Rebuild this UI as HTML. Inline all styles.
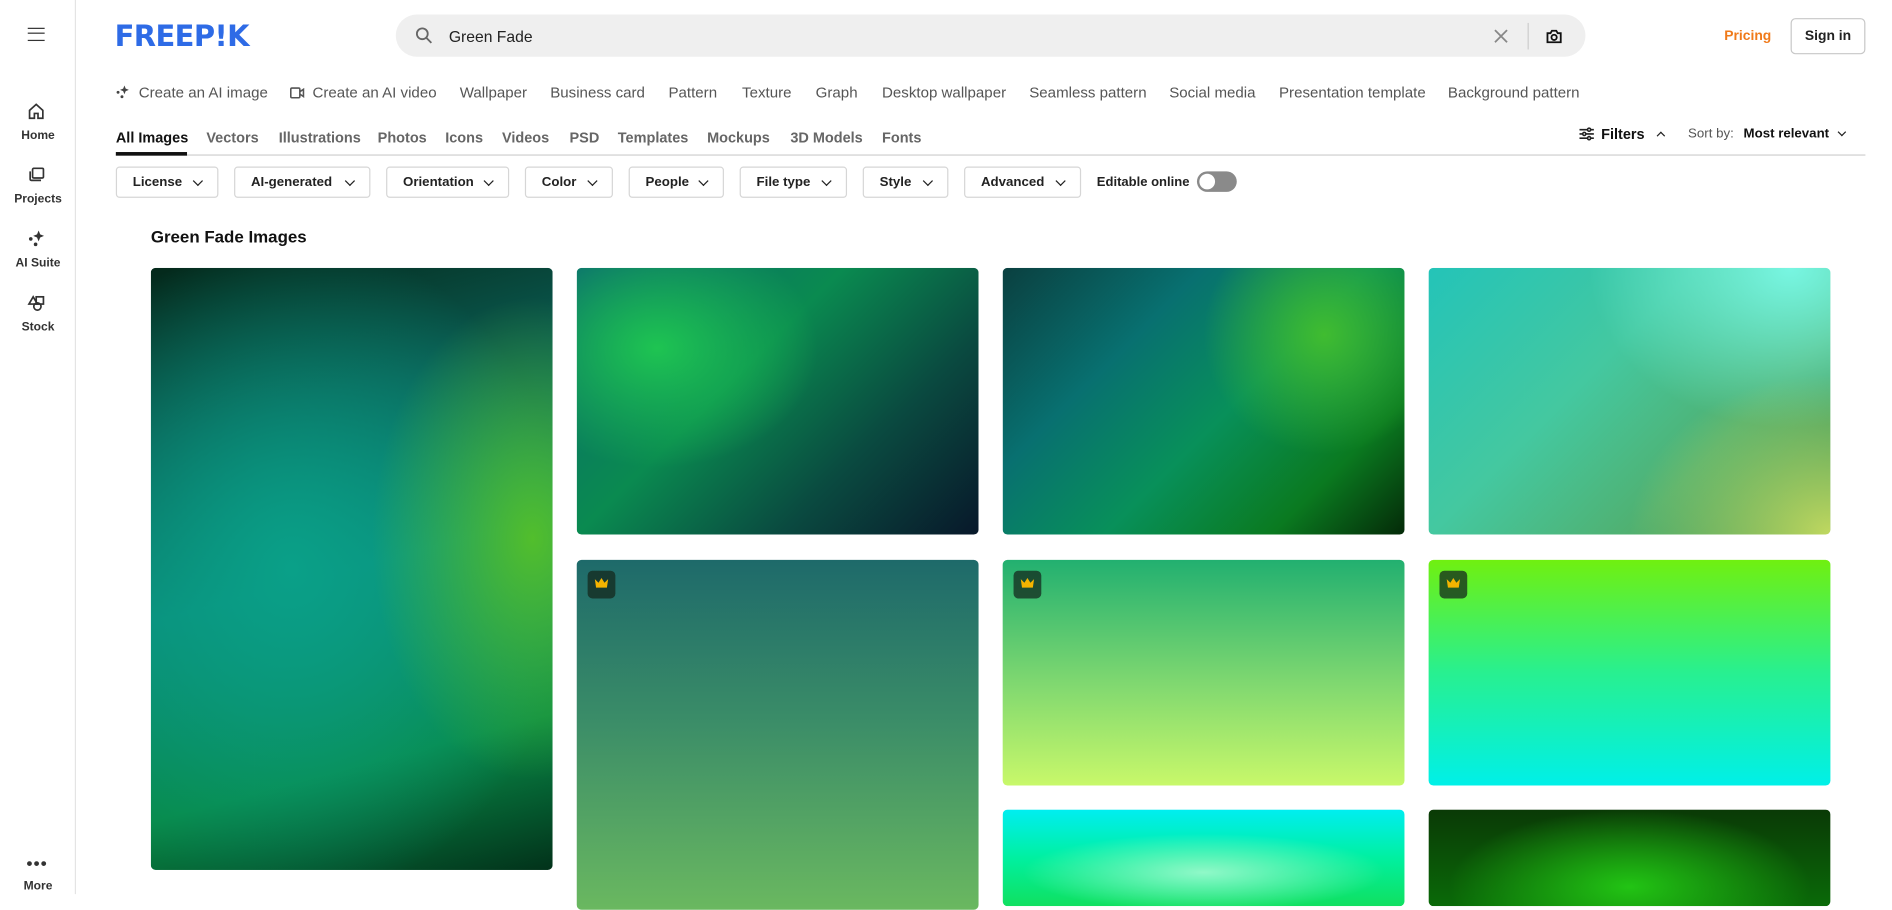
<!DOCTYPE html>
<html><head><meta charset="utf-8">
<style>
*{box-sizing:border-box;margin:0;padding:0}
html,body{width:1892px;height:894px;overflow:hidden;background:#fff}
#s{position:absolute;left:0;top:0;width:1568px;height:741px;transform:scale(1.2066);transform-origin:0 0;font-family:"Liberation Sans",sans-serif;color:#222}
.a{position:absolute;white-space:nowrap}
.side{position:absolute;left:0;top:0;width:63px;height:741px;border-right:1px solid #e4e4e4}
.nl{position:absolute;width:63px;text-align:center;font-size:10px;font-weight:bold;color:#333}
.ic{position:absolute;left:22px}
.sug{font-size:12.5px;color:#555;top:70px}
.tab{font-size:12px;color:#666;top:107px;font-weight:bold}
.chip{position:absolute;top:138px;height:26px;border:1px solid #d6d6d6;border-radius:3px;font-size:11px;font-weight:bold;color:#222;padding:0 0 0 13px;line-height:24px}
.chip:after{content:"";position:absolute;right:13px;top:8px;width:5px;height:5px;border-right:1.6px solid #222;border-bottom:1.6px solid #222;transform:rotate(45deg)}
.img{position:absolute;border-radius:4px;overflow:hidden}
.crown{position:absolute;left:9px;top:9px;width:23px;height:23px;border-radius:4px;background:rgba(20,40,30,.75)}
</style></head><body><div id="s">
<div class="side">
<div class="a" style="left:23px;top:23px;width:14px;height:11px;border-top:1.6px solid #333;border-bottom:1.6px solid #333"><div style="margin-top:3.2px;border-top:1.6px solid #333"></div></div>
<svg class="ic" style="top:84px" width="16" height="16" viewBox="0 0 16 16" fill="none" stroke="#333" stroke-width="1.4"><path d="M2.5 7.5L8 2.5l5.5 5V14h-4v-4h-3v4h-4z"/></svg>
<div class="nl" style="top:107px">Home</div>
<svg class="ic" style="top:137px" width="16" height="16" viewBox="0 0 16 16" fill="none" stroke="#333" stroke-width="1.4"><rect x="5" y="2.5" width="9" height="8" rx="1"/><path d="M3 5v6.5a1 1 0 0 0 1 1h8"/></svg>
<div class="nl" style="top:160px">Projects</div>
<svg class="ic" style="top:190px" width="16" height="16" viewBox="0 0 16 16" fill="#333"><path d="M10 1l1.3 3.2L14.5 5.5l-3.2 1.3L10 10 8.7 6.8 5.5 5.5l3.2-1.3z"/><circle cx="3.5" cy="8" r="1.5"/><circle cx="7.5" cy="12.5" r="1.5"/></svg>
<div class="nl" style="top:213px">AI Suite</div>
<svg class="ic" style="top:243px" width="16" height="16" viewBox="0 0 16 16" fill="none" stroke="#333" stroke-width="1.4"><path d="M2 9l3.5-6L9 9z"/><rect x="8" y="3" width="6" height="6"/><circle cx="9" cy="11" r="3"/></svg>
<div class="nl" style="top:266px">Stock</div>
<div class="a" style="left:22px;top:711px;font-size:14px;font-weight:bold;letter-spacing:1px;color:#333;line-height:8px">•••</div>
<div class="nl" style="top:729px">More</div>
</div>
<div class="a" style="left:95px;top:16px;font-size:24px;font-weight:900;color:#2e6be6;letter-spacing:-0.5px;font-family:'DejaVu Sans','Liberation Sans',sans-serif;line-height:28px">FREEP!K</div>
<div class="a" style="left:328px;top:12px;width:986px;height:35px;border-radius:18px;background:#efefef"></div>
<svg class="a" style="left:344px;top:22px" width="15" height="15" viewBox="0 0 15 15" fill="none" stroke="#666" stroke-width="1.5"><circle cx="6" cy="6" r="4.5"/><path d="M9.5 9.5l4 4"/></svg>
<div class="a" style="left:372px;top:23px;font-size:13px;color:#222">Green Fade</div>
<svg class="a" style="left:1238px;top:24px" width="12" height="12" viewBox="0 0 12 12" stroke="#888" stroke-width="1.5"><path d="M1 1l10 10M11 1L1 11"/></svg>
<div class="a" style="left:1266px;top:19px;width:1px;height:22px;background:#ccc"></div>
<svg class="a" style="left:1281px;top:23px" width="14" height="14" viewBox="0 0 14 14" fill="none" stroke="#111" stroke-width="1.5"><path d="M1.5 4.5h2.5l1.2-2h3.6l1.2 2h2.5v7.5h-11z"/><circle cx="7" cy="8" r="2.2"/></svg>
<div class="a" style="left:1429px;top:24px;font-size:11.5px;font-weight:bold;color:#f07a1a">Pricing</div>
<div class="a" style="left:1484px;top:15px;width:62px;height:30px;border:1px solid #c8c8c8;border-radius:4px;font-size:11.5px;font-weight:bold;text-align:center;line-height:28px">Sign in</div>
<svg class="a" style="left:95px;top:70px" width="13" height="13" viewBox="0 0 16 16" fill="#444"><path d="M10 1l1.3 3.2L14.5 5.5l-3.2 1.3L10 10 8.7 6.8 5.5 5.5l3.2-1.3z"/><circle cx="3.5" cy="8" r="1.5"/><circle cx="7.5" cy="12.5" r="1.5"/></svg>
<div class="a sug" style="left:115px">Create an AI image</div>
<svg class="a" style="left:240px;top:72px" width="13" height="10" viewBox="0 0 13 10" fill="none" stroke="#555" stroke-width="1.3"><rect x="1" y="1" width="7.5" height="8" rx="1"/><path d="M8.5 4l3-2v6l-3-2"/></svg>
<div class="a sug" style="left:259px">Create an AI video</div>
<div class="a sug" style="left:381px">Wallpaper</div>
<div class="a sug" style="left:456px">Business card</div>
<div class="a sug" style="left:554px">Pattern</div>
<div class="a sug" style="left:615px">Texture</div>
<div class="a sug" style="left:676px">Graph</div>
<div class="a sug" style="left:731px">Desktop wallpaper</div>
<div class="a sug" style="left:853px">Seamless pattern</div>
<div class="a sug" style="left:969px">Social media</div>
<div class="a sug" style="left:1060px">Presentation template</div>
<div class="a sug" style="left:1200px">Background pattern</div>
<div class="a tab" style="left:96px;color:#111">All Images</div>
<div class="a tab" style="left:171px">Vectors</div>
<div class="a tab" style="left:231px">Illustrations</div>
<div class="a tab" style="left:313px">Photos</div>
<div class="a tab" style="left:369px">Icons</div>
<div class="a tab" style="left:416px">Videos</div>
<div class="a tab" style="left:472px">PSD</div>
<div class="a tab" style="left:512px">Templates</div>
<div class="a tab" style="left:586px">Mockups</div>
<div class="a tab" style="left:655px">3D Models</div>
<div class="a tab" style="left:731px">Fonts</div>
<div class="a" style="left:96px;top:128px;width:1450px;height:1px;background:#cfcfcf"></div>
<div class="a" style="left:96px;top:126px;width:59px;height:3px;background:#111"></div>
<svg class="a" style="left:1309px;top:105px" width="12" height="12" viewBox="0 0 12 12" stroke="#222" stroke-width="1.3" fill="#fff"><path d="M0 2.5h12M0 6h12M0 9.5h12"/><circle cx="8" cy="2.5" r="1.3"/><circle cx="4" cy="6" r="1.3"/><circle cx="8" cy="9.5" r="1.3"/></svg>
<div class="a" style="left:1327px;top:104px;font-size:12px;font-weight:bold;color:#111">Filters</div>
<div class="a" style="left:1374px;top:110px;width:5px;height:5px;border-left:1.6px solid #222;border-top:1.6px solid #222;transform:rotate(45deg)"></div>
<div class="a" style="left:1399px;top:105px;font-size:11px;color:#555">Sort by:</div>
<div class="a" style="left:1445px;top:105px;font-size:11px;font-weight:bold;color:#111">Most relevant</div>
<div class="a" style="left:1524px;top:107px;width:5px;height:5px;border-right:1.6px solid #222;border-bottom:1.6px solid #222;transform:rotate(45deg)"></div>
<div class="chip" style="left:96px;width:85px">License</div>
<div class="chip" style="left:194px;width:113px">AI-generated</div>
<div class="chip" style="left:320px;width:102px">Orientation</div>
<div class="chip" style="left:435px;width:73px">Color</div>
<div class="chip" style="left:521px;width:79px">People</div>
<div class="chip" style="left:613px;width:89px">File type</div>
<div class="chip" style="left:715px;width:71px">Style</div>
<div class="chip" style="left:799px;width:97px">Advanced</div>
<div class="a" style="left:909px;top:145px;font-size:10.8px;font-weight:bold">Editable online</div>
<div class="a" style="left:992px;top:142px;width:33px;height:17px;border-radius:9px;background:#8a8a8a"><div style="position:absolute;left:2px;top:2px;width:13px;height:13px;border-radius:50%;background:#fff"></div></div>
<div class="a" style="left:125px;top:188px;font-size:14px;font-weight:bold;color:#111">Green Fade Images</div>
<div class="img" style="left:125px;top:222px;width:333px;height:499px;background:radial-gradient(ellipse 40% 40% at 95% 45%,#52be2c 0%,rgba(60,180,40,0) 100%),radial-gradient(ellipse 70% 55% at 35% 50%,#0aa088 0%,rgba(10,150,120,0) 100%),linear-gradient(165deg,#04281a 0%,#0a5a50 25%,#0a8a78 50%,#088a48 78%,#02321a 100%)"></div>
<div class="img" style="left:478px;top:222px;width:333px;height:221px;background:radial-gradient(ellipse 40% 45% at 20% 30%,#1ec452 0%,rgba(20,180,80,0) 100%),linear-gradient(135deg,#0a6a70 0%,#0a8a50 40%,#0a4a40 70%,#08182a 100%)"></div>
<div class="img" style="left:831px;top:222px;width:333px;height:221px;background:radial-gradient(ellipse 30% 45% at 80% 25%,#40bc30 0%,rgba(50,180,40,0) 100%),linear-gradient(135deg,#0a4040 0%,#087070 30%,#08905a 55%,#0a7a20 80%,#042a08 100%)"></div>
<div class="img" style="left:1184px;top:222px;width:333px;height:221px;background:radial-gradient(ellipse 50% 60% at 100% 100%,#c0d860 0%,rgba(190,215,95,0) 100%),radial-gradient(ellipse 50% 60% at 90% 0%,#78f6e2 0%,rgba(120,245,225,0) 100%),linear-gradient(135deg,#24c4b8 0%,#44c8a0 40%,#50b070 70%,#2e8a50 100%)"></div>
<div class="img" style="left:478px;top:464px;width:333px;height:290px;background:linear-gradient(180deg,#1e6a6a 0%,#3a8c68 45%,#6ab860 100%)"><div class="crown"></div></div>
<div class="img" style="left:831px;top:464px;width:333px;height:187px;background:linear-gradient(180deg,#22b070 0%,#80d870 55%,#c8f86a 100%)"><div class="crown"></div></div>
<div class="img" style="left:1184px;top:464px;width:333px;height:187px;background:linear-gradient(180deg,#70f010 0%,#28f090 50%,#00f0e8 100%)"><div class="crown"></div></div>
<div class="img" style="left:831px;top:671px;width:333px;height:80px;background:radial-gradient(ellipse 45% 40% at 50% 65%,#90f8c8 0%,rgba(100,245,180,0) 100%),linear-gradient(180deg,#00eef0 0%,#00f0a0 50%,#10e060 100%)"></div>
<div class="img" style="left:1184px;top:671px;width:333px;height:80px;background:radial-gradient(ellipse 45% 80% at 50% 80%,#22c414 0%,rgba(30,180,20,0) 100%),linear-gradient(180deg,#0a3a06 0%,#0a6a08 100%)"></div>
<svg class="a" style="left:492px;top:478px" width="13" height="11" viewBox="0 0 13 11" fill="#f4b400"><path d="M1 2l3 3 2.5-4 2.5 4 3-3-1 7H2z"/></svg>
<svg class="a" style="left:845px;top:478px" width="13" height="11" viewBox="0 0 13 11" fill="#f4b400"><path d="M1 2l3 3 2.5-4 2.5 4 3-3-1 7H2z"/></svg>
<svg class="a" style="left:1198px;top:478px" width="13" height="11" viewBox="0 0 13 11" fill="#f4b400"><path d="M1 2l3 3 2.5-4 2.5 4 3-3-1 7H2z"/></svg>
</div></body></html>
